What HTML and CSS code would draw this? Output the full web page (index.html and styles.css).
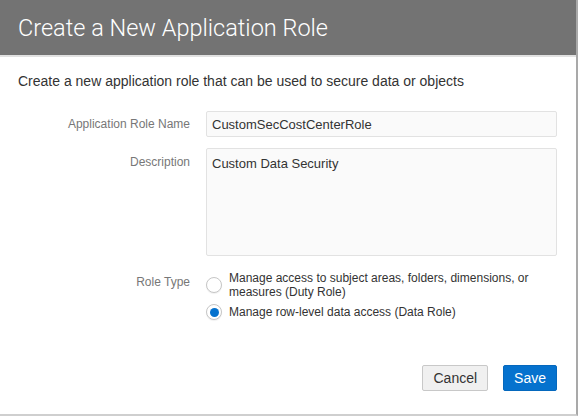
FILE: index.html
```html
<!DOCTYPE html>
<html lang="en">
<head>
    <meta charset="UTF-8">
    <title>Create a New Application Role</title>
    <link rel="stylesheet" href="styles.css">
</head>
<body>
    <div class="dialog">
        <div class="dialog-header">
            <h1 class="dialog-title">Create a New Application Role</h1>
        </div>

        <div class="dialog-body">
            <p class="intro">Create a new application role that can be used to secure data or objects</p>

            <div class="form">
                <label class="form-label" for="roleName">Application Role Name</label>
                <input class="field" id="roleName" type="text" value="CustomSecCostCenterRole">

                <label class="form-label form-label-top" for="roleDesc">Description</label>
                <textarea class="field field-area" id="roleDesc">Custom Data Security</textarea>

                <span class="form-label form-label-top role-label">Role Type</span>
                <div class="radio-group">
                    <label class="radio-option">
                        <span class="radio"></span>
                        <span class="radio-text">Manage access to subject areas, folders, dimensions, or measures (Duty Role)</span>
                    </label>
                    <label class="radio-option">
                        <span class="radio checked"></span>
                        <span class="radio-text">Manage row-level data access (Data Role)</span>
                    </label>
                </div>
            </div>
        </div>

        <div class="dialog-footer">
            <button class="btn">Cancel</button>
            <button class="btn btn-primary">Save</button>
        </div>
    </div>
</body>
</html>
```

FILE: styles.css
```css
body {
    margin: 0;
    background: #fff;
    font-family: "Liberation Sans", Arial, sans-serif;
    color: #333;
}
.dialog {
    width: 576px;
    height: 414px;
    border-right: 2px solid #a9a9a9;
    border-bottom: 2px solid #cfcfcf;
    display: flex;
    flex-direction: column;
    background: #fff;
}
.dialog-header {
    height: 55px;
    background: #737373;
    border-bottom: 2px solid #e1e1e1;
    display: flex;
    align-items: center;
    padding-left: 18px;
}
.dialog-title {
    margin: 0;
    font-family: Roboto, "Liberation Sans", sans-serif;
    font-weight: 300;
    font-size: 23.5px;
    color: #fff;
}
.dialog-body {
    padding: 16px 19px 0 18px;
}
.intro {
    margin: 0;
    font-size: 14px;
    line-height: 17px;
    color: #333;
}
.form {
    margin-top: 21px;
    display: grid;
    grid-template-columns: 172px 1fr;
    column-gap: 16px;
    row-gap: 11px;
    align-items: center;
}
.form-label {
    text-align: right;
    font-size: 12px;
    color: #777;
}
.form-label-top {
    align-self: start;
    padding-top: 7px;
}
.field {
    box-sizing: border-box;
    height: 26px;
    margin: 0;
    padding: 0 5px;
    border: 1px solid #e2e2e2;
    border-radius: 2px;
    background: #fafafa;
    font-family: inherit;
    font-size: 13px;
    color: #333;
}
.field-area {
    height: 108px;
    padding: 7px 5px;
    resize: none;
    line-height: 16px;
}
.role-label {
    margin-top: 4px;
    padding-top: 4px;
}
.radio-group {
    margin-top: 4px;
    display: flex;
    flex-direction: column;
    gap: 5px;
}
.radio-option {
    display: flex;
    align-items: center;
    gap: 7px;
}
.radio {
    flex: none;
    width: 14px;
    height: 14px;
    border: 1px solid #c6c6c6;
    border-radius: 50%;
    background: #fff;
    box-shadow: 0 1px 1px rgba(0,0,0,0.06);
    display: flex;
    align-items: center;
    justify-content: center;
}
.radio.checked::after {
    content: "";
    width: 9px;
    height: 9px;
    border-radius: 50%;
    background: #0572ce;
}
.radio-text {
    font-size: 12px;
    line-height: 14px;
    color: #333;
}
.dialog-footer {
    margin-top: auto;
    padding: 0 19px 23px 0;
    display: flex;
    justify-content: flex-end;
    gap: 15px;
}
.btn {
    height: 26px;
    padding: 0 10px;
    border: 1px solid #c8c8c8;
    border-radius: 2px;
    background: #f0f0f0;
    font-family: inherit;
    font-size: 14px;
    color: #333;
}
.btn-primary {
    background: #0572ce;
    border-color: #0568bd;
    color: #fff;
}
```
